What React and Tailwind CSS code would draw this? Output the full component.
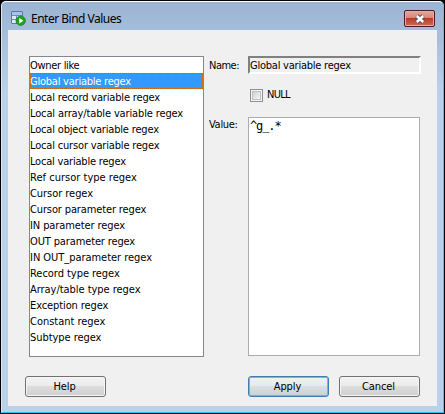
import React from "react";

const items = [
  ["Owner like", "tracking-[-0.3px]"],
  ["Global variable regex", "tracking-[-0.23px]"],
  ["Local record variable regex", "tracking-[-0.17px]"],
  ["Local array/table variable regex", "tracking-[-0.13px]"],
  ["Local object variable regex", "tracking-[-0.17px]"],
  ["Local cursor variable regex", "tracking-[-0.17px]"],
  ["Local variable regex", "tracking-[-0.2px]"],
  ["Ref cursor type regex", "tracking-[0.02px]"],
  ["Cursor regex", "tracking-[-0.05px]"],
  ["Cursor parameter regex", "tracking-[-0.13px]"],
  ["IN parameter regex", "tracking-[-0.1px]"],
  ["OUT parameter regex", "tracking-[-0.13px]"],
  ["IN OUT_parameter regex", "tracking-[-0.04px]"],
  ["Record type regex", "tracking-[-0.04px]"],
  ["Array/table type regex", "tracking-[-0.04px]"],
  ["Exception regex", "tracking-[-0.1px]"],
  ["Constant regex", "tracking-[-0.02px]"],
  ["Subtype regex", "tracking-[-0.05px]"],
];

function AppIcon() {
  return (
    <svg width="15" height="15" viewBox="0 0 15 15" className="block">
      <rect x="0.5" y="0.5" width="11" height="12" rx="0.5" fill="#dce8f6" stroke="#5479b5" />
      <path d="M1 4.5H11M1 8.5H11M5.5 4.5V12" stroke="#6c8dc2" fill="none" />
      <rect x="1" y="1" width="10" height="3" fill="#a9c3e5" />
      <circle cx="9.7" cy="9.7" r="4.7" fill="#21a321" stroke="#158015" strokeWidth="0.7" />
      <path d="M8.2 6.9L12.4 9.7L8.2 12.5Z" fill="#fff" />
    </svg>
  );
}

function CloseButton() {
  return (
    <button className="flex h-[17px] w-[31px] items-center justify-center rounded-[2px] border border-[#4b1a26] bg-[#d98679] p-0 shadow-[inset_0_0_0_1px_#e9aaa0]">
      <span className="flex h-[13px] w-[27px] items-center justify-center bg-[linear-gradient(#e3a197_0%,#d7857a_48%,#b93c26_50%,#cc6450_100%)]">
        <svg width="12" height="10" viewBox="0 0 12 10">
          <path d="M2.8 2L9.2 8M9.2 2L2.8 8" stroke="#555260" strokeWidth="4.6" />
          <path d="M2.8 2L9.2 8M9.2 2L2.8 8" stroke="#fff" strokeWidth="2.5" />
        </svg>
      </span>
    </button>
  );
}

function Button({ children, primary }) {
  return (
    <button
      className={
        "h-[21px] w-[81px] rounded-[3px] border p-0 pr-0.5 pb-px text-center leading-[17px] tracking-[-0.1px] " +
        (primary
          ? "border-[#3c7fb1] bg-[linear-gradient(#f0f2f3_0%,#e6e9eb_48%,#d8dee1_50%,#cdd1d4_100%)] shadow-[inset_0_0_0_1px_#48c8f3]"
          : "border-[#707070] bg-[linear-gradient(#f2f2f2_0%,#ebebeb_48%,#dddddd_50%,#cfcfcf_100%)] shadow-[inset_0_0_0_1px_#f6f6f6]")
      }
    >
      {children}
    </button>
  );
}

export default function App() {
  return (
    <div className="h-[414px] w-[445px] bg-black font-['DejaVu_Sans_Condensed','DejaVu_Sans',sans-serif] text-[11px] text-black [font-stretch:condensed]">
      <div className="h-[414px] w-[445px] overflow-hidden rounded-t-[6px] border border-black bg-[#b9d1ea]">
        <div className="h-[412px] w-[443px] rounded-t-[5px] border border-t-white border-r-[#35d0ee] border-b-[#25c8ec] border-l-[#d9e8f5] bg-linear-to-b from-[#9ab4d3] to-[#b9d1ea] to-[90px] px-[6px]">
          <header className="flex h-7 items-start justify-between pt-2 pr-0.5 pl-[3px]">
            <div className="flex gap-[5px] pt-px">
              <AppIcon />
              <h1 className="font-['Noto_Sans',sans-serif] text-[12px] leading-4 tracking-[-0.5px] whitespace-nowrap">Enter Bind Values</h1>
            </div>
            <CloseButton />
          </header>
          <main className="h-[376px] w-[429px] bg-[#f0f0f0] pt-[26px] pl-[17px]">
            <div className="flex">
              <ul className="ml-1 h-[301px] w-[175px] border border-[#828790] bg-white">
                {items.map(([label, track], i) => (
                  <li
                    key={label}
                    className={
                      "h-4 pt-px leading-4 whitespace-nowrap " + track +
                      (i === 1 ? " bg-[#3399ff] text-white outline-1 -outline-offset-1 outline-dotted outline-[#cc6600]" : "")
                    }
                  >
                    {label}
                  </li>
                ))}
              </ul>
              <div className="ml-[5px] w-[39px] leading-4">
                <div className="pt-0.5 tracking-[-0.5px]">Name:</div>
                <div className="pt-[43px] tracking-[-0.3px]">Value:</div>
              </div>
              <div className="w-[173px]">
                <div className="h-[18px] w-[173px] border-2 border-t-[#808080] border-r-white border-b-white border-l-[#808080] pt-px leading-[14px] tracking-[-0.23px] whitespace-nowrap">
                  Global variable regex
                </div>
                <label className="mt-[15px] ml-0.5 flex h-[13px] items-center gap-1">
                  <span className="h-[13px] w-[13px] border border-[#8e8f8f] bg-[#f4f4f4] p-px">
                    <span className="block h-[9px] w-[9px] border border-[#bcc0c5] bg-linear-to-br from-[#cfd3d8] to-[#f6f6f6]" />
                  </span>
                  <span className="tracking-[-0.7px]">NULL</span>
                </label>
                <div className="mt-[15px] h-[239px] w-[172px] border border-[#abadb3] bg-white px-px font-['DejaVu_Sans_Mono',monospace] text-[12px] leading-4 tracking-[-1.1px]">
                  ^g_.*
                </div>
              </div>
            </div>
            <footer className="mt-[19px] flex">
              <Button>Help</Button>
              <span className="w-[142px]" />
              <Button primary>Apply</Button>
              <span className="w-2.5" />
              <Button>Cancel</Button>
            </footer>
          </main>
        </div>
      </div>
    </div>
  );
}
